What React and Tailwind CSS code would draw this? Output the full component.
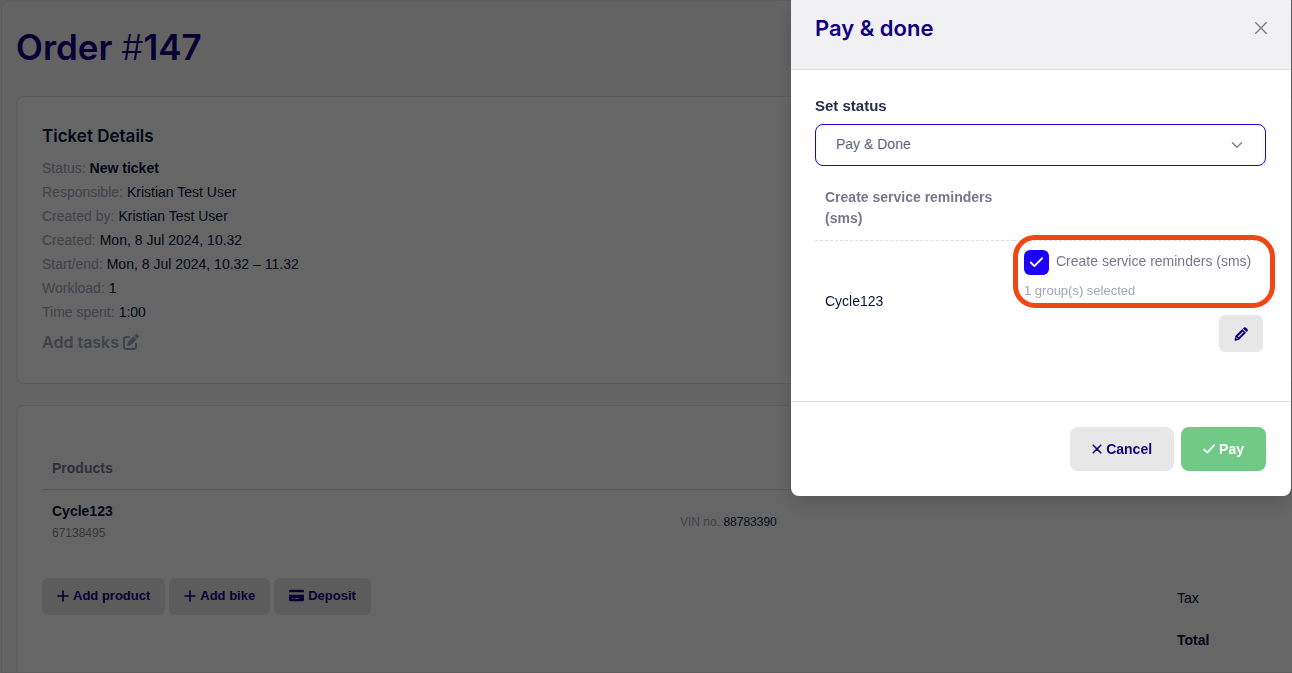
import { useState } from 'react';
import { FaCreditCard, FaPenToSquare } from 'react-icons/fa6';
import { Check, ChevronDown } from 'lucide-react';

const ticketRows = [
  { label: 'Status:', value: 'New ticket', bold: true },
  { label: 'Responsible:', value: 'Kristian Test User' },
  { label: 'Created by:', value: 'Kristian Test User' },
  { label: 'Created:', value: 'Mon, 8 Jul 2024, 10.32' },
  { label: 'Start/end:', value: 'Mon, 8 Jul 2024, 10.32 – 11.32' },
  { label: 'Workload:', value: '1' },
  { label: 'Time spent:', value: '1:00' },
];

function PlusIcon() {
  return (
    <svg width="12" height="12" viewBox="0 0 12 12" fill="none" stroke="currentColor" strokeWidth="1.6" strokeLinecap="round">
      <path d="M6 1v10M1 6h10" />
    </svg>
  );
}

function CrossIcon() {
  return (
    <svg width="10" height="10" viewBox="0 0 10 10" fill="none" stroke="currentColor" strokeWidth="1.6" strokeLinecap="round">
      <path d="M1.2 1.2l7.6 7.6M8.8 1.2L1.2 8.8" />
    </svg>
  );
}

function TickIcon() {
  return (
    <svg width="12" height="12" viewBox="0 0 12 12" fill="none" stroke="currentColor" strokeWidth="1.7" strokeLinecap="round" strokeLinejoin="round">
      <path d="M1 6.4l3.3 3.3L11.2 2.2" />
    </svg>
  );
}

function PencilIcon() {
  return (
    <svg width="14" height="14" viewBox="0 0 14 14" fill="currentColor">
      <path d="M1.3 8.9L8.2 2l3.8 3.8-6.9 6.9-3.6 1c-.6.2-1.1-.3-.9-.9z" />
      <path d="M8.9 1.4l.7-.7c.7-.7 1.8-.7 2.5 0l1.2 1.2c.7.7.7 1.8 0 2.5l-.7.7z" />
      <path d="M4.6 9.5l4.2-4.2" stroke="#e7e7e7" strokeWidth="1.1" strokeLinecap="round" />
      <path d="M1.9 10.3l1.8 1.8" stroke="#e7e7e7" strokeWidth="0.8" />
    </svg>
  );
}

const productActions = [
  { label: 'Add product', icon: <PlusIcon /> },
  { label: 'Add bike', icon: <PlusIcon /> },
  { label: 'Deposit', icon: <FaCreditCard size={15} /> },
];

function TicketDetails() {
  return (
    <section className="rounded-l-lg border border-r-0 border-[#e4e4e8] bg-white px-[25px] pt-[27px] pb-[29px]">
      <h2 className="font-['Inter',sans-serif] text-[17px] leading-6 font-semibold text-[#071437]">Ticket Details</h2>
      <dl className="mt-2 text-sm leading-6">
        {ticketRows.map((row) => (
          <div key={row.label} className="flex gap-1">
            <dt className="text-[#a1a5b7]">{row.label}</dt>
            <dd className={row.bold ? 'font-bold text-[#071437]' : 'text-[#071437]'}>{row.value}</dd>
          </div>
        ))}
      </dl>
      <button type="button" className="mt-1.5 flex items-center gap-1 font-['Inter',sans-serif] text-base leading-6 font-semibold text-[#a1a5b7]">
        Add tasks
        <FaPenToSquare size={16} />
      </button>
    </section>
  );
}

function Products() {
  return (
    <section className="flex-1 rounded-tl-lg border-t border-l border-[#e4e4e8] bg-white pt-12 pl-[25px]">
      <table className="w-full text-left text-sm">
        <thead>
          <tr className="border-b border-[#d8d8de] text-[#78758c]">
            <th className="w-[638px] pt-1 pb-[11px] pl-2.5 leading-5 font-bold">Products</th>
            <th />
          </tr>
        </thead>
        <tbody>
          <tr>
            <td className="pt-2.5 pl-2.5 leading-[22px]">
              <div className="font-bold text-[#071437]">Cycle123</div>
              <div className="text-xs leading-[22px] text-[#8a8a94]">67138495</div>
            </td>
            <td className="pt-2.5 text-xs">
              <span className="text-[#a1a5b7]">VIN no.</span> <span className="text-[#071437]">88783390</span>
            </td>
          </tr>
        </tbody>
      </table>

      <div className="mt-[34px] flex items-start justify-between">
        <div className="flex gap-1">
          {productActions.map(({ label, icon }) => (
            <button key={label} type="button" className="flex h-[37px] items-center gap-1 rounded-md bg-[#e7e7e7] px-[15px] pb-0.5 text-[13px] font-bold text-[#10007f]">
              {icon}
              {label}
            </button>
          ))}
        </div>
        <dl className="w-[115px] pt-2.5 text-sm leading-5 text-[#071437]">
          <dt>Tax</dt>
          <dt className="mt-[22px] font-bold">Total</dt>
        </dl>
      </div>
    </section>
  );
}

function PayDialog() {
  const [status, setStatus] = useState('done');
  const [reminders, setReminders] = useState(true);

  return (
    <div role="dialog" aria-labelledby="pay-title" className="w-[500px] overflow-hidden rounded-b-lg bg-white shadow-[0_8px_20px_rgba(0,0,0,0.15)]">
      <header className="flex items-start justify-between border-b border-[#dedee2] bg-[#f1f1f4] px-6 pt-3 pb-[25px]">
        <h2 id="pay-title" className="font-['Inter',sans-serif] text-[22px] leading-8 font-semibold text-[#10007f]">Pay &amp; done</h2>
        <button type="button" aria-label="Close" className="mt-2.5 text-[#7c7c80]">
          <svg width="12" height="12" viewBox="0 0 12 12" fill="none" stroke="currentColor" strokeWidth="1.4" strokeLinecap="round">
            <path d="M0.8 0.8l10.4 10.4M11.2 0.8L0.8 11.2" />
          </svg>
        </button>
      </header>

      <div className="pt-[26px] pr-[25px] pb-[41px] pl-6">
        <label htmlFor="status" className="block text-[15px] leading-5 font-bold text-[#252f4a]">Set status</label>
        <div className="relative mt-2">
          <select
            id="status"
            value={status}
            onChange={(e) => setStatus(e.target.value)}
            className="h-[42px] w-full appearance-none rounded-lg border border-[#1b00e6] bg-white px-5 pb-0.5 text-sm text-[#5e6278]"
          >
            <option value="done">Pay &amp; Done</option>
          </select>
          <ChevronDown size={18} className="pointer-events-none absolute top-3 right-5 text-[#7e8299]" />
        </div>

        <table className="mt-[11px] w-full table-fixed text-left text-sm">
          <thead>
            <tr className="border-b border-dashed border-[#dbdfe9]">
              <th className="w-[199px] px-2.5 pt-2.5 pb-[11px] leading-[21px] font-bold text-[#78758c]">Create service reminders (sms)</th>
              <th />
            </tr>
          </thead>
          <tbody>
            <tr>
              <td className="px-2.5 align-middle text-[#071437]">Cycle123</td>
              <td className="relative pt-[9px] pr-[3px] pb-2 pl-2.5">
                <label className="flex items-start gap-[7px] leading-[22px] text-[#78758c]">
                  <span className="relative flex size-[25px] shrink-0">
                    <input
                      type="checkbox"
                      checked={reminders}
                      onChange={(e) => setReminders(e.target.checked)}
                      className="size-full appearance-none rounded-md bg-[#e7e7e7] checked:bg-[#1b00ff]"
                    />
                    {reminders && <Check size={17} strokeWidth={2.5} className="pointer-events-none absolute top-1 left-1 text-white" />}
                  </span>
                  Create service reminders (sms)
                </label>
                <p className="mt-1.5 text-[13px] leading-5 text-[#a1a5b7]">1 group(s) selected</p>
                <button type="button" aria-label="Edit reminder groups" className="mt-3.5 ml-auto flex h-[37px] w-11 items-center justify-center rounded-md bg-[#e7e7e7] text-[#10007f]">
                  <PencilIcon />
                </button>
                {/* callout ring around the reminder option */}
                <div className="pointer-events-none absolute -top-1.5 -right-[9px] -left-px h-[73px] rounded-[22px] border-5 border-[#f04614]" />
              </td>
            </tr>
          </tbody>
        </table>
      </div>

      <footer className="flex justify-end gap-[7px] border-t border-[#dedee2] py-[25px] pr-[25px] pl-6 text-sm font-bold">
        <button type="button" className="flex h-11 items-center gap-1 rounded-lg bg-[#e7e7e7] px-[22px] text-[#10007f]">
          <CrossIcon />
          Cancel
        </button>
        <button type="button" className="flex h-11 items-center gap-1 rounded-lg bg-[#70c985] px-[22px] text-white">
          <TickIcon />
          Pay
        </button>
      </footer>
    </div>
  );
}

export default function App() {
  return (
    <div className="relative min-h-screen overflow-hidden bg-[#f4f4f4] pl-px font-['Liberation_Sans',Arial,sans-serif]">
      <main className="flex min-h-screen flex-col rounded-tl-lg border-t border-b border-l border-[#e9e9e9] bg-[#f8f8f8] pt-[26px] pl-3.5">
        <h1 className="font-['Inter',sans-serif] text-[35px] leading-10 font-semibold text-[#10007f]">
          Order <span className="font-light">#</span>147
        </h1>
        <div className="mt-[29px] flex flex-1 flex-col gap-[21px]">
          <TicketDetails />
          <Products />
        </div>
      </main>
      <div className="fixed inset-0 flex items-start justify-end bg-black/60 pr-px">
        <PayDialog />
      </div>
    </div>
  );
}
